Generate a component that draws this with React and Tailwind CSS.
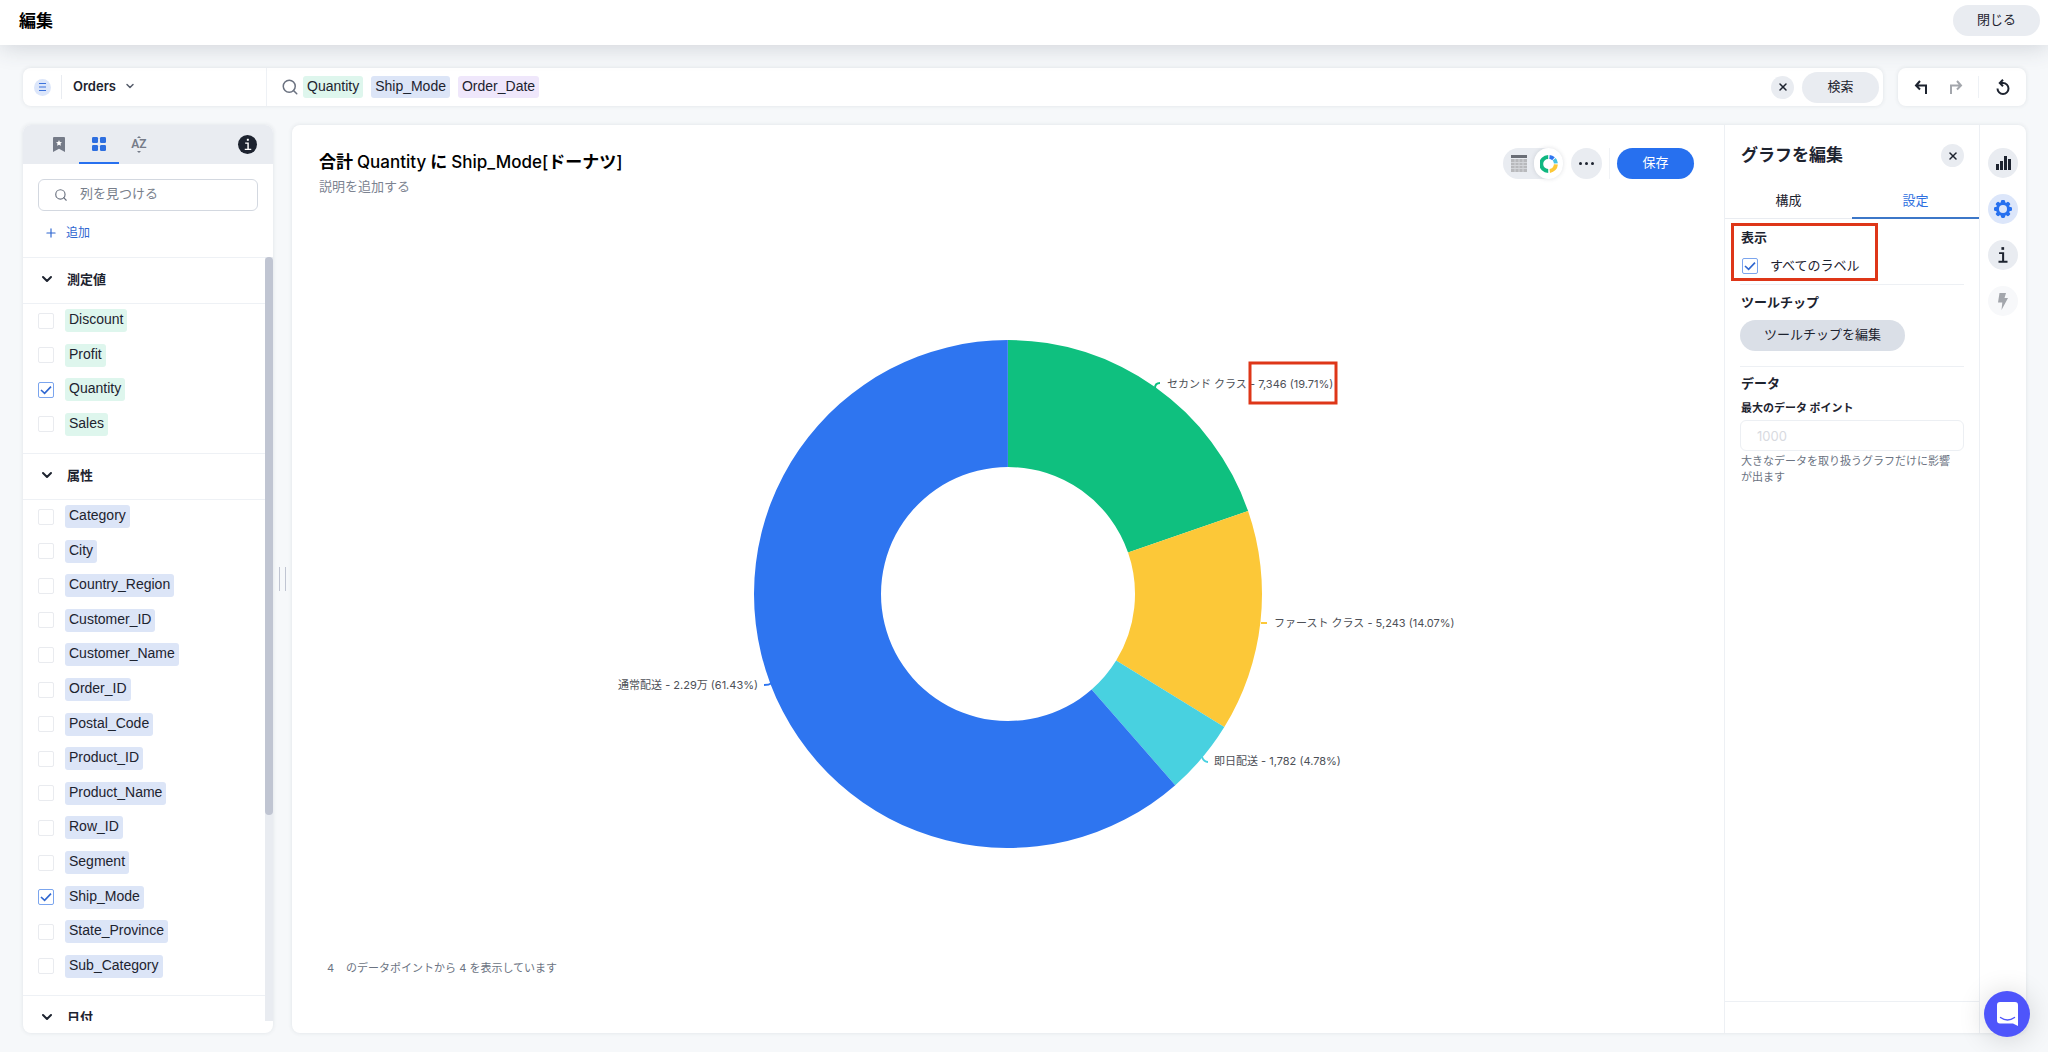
import { useState } from "react";
import { ChevronDown, Plus, Search, X } from "lucide-react";
import clsx from "clsx";

const MEASURES = ["Discount", "Profit", "Quantity", "Sales"];

const ATTRIBUTES = [
  "Category",
  "City",
  "Country_Region",
  "Customer_ID",
  "Customer_Name",
  "Order_ID",
  "Postal_Code",
  "Product_ID",
  "Product_Name",
  "Row_ID",
  "Segment",
  "Ship_Mode",
  "State_Province",
  "Sub_Category",
];

const SLICES = [
  { share: 19.71, color: "#0fc07f", name: "セカンド クラス", value: "7,346 (19.71%)", x: 619, y: 54, line: "M607 54q0 -5 5 -5" },
  { share: 14.07, color: "#fcc838", name: "ファースト クラス", value: "5,243 (14.07%)", x: 726, y: 293, line: "M713 289h6" },
  { share: 4.78, color: "#48d1e0", name: "即日配送", value: "1,782 (4.78%)", x: 666, y: 431, line: "M654 423q2 5 6 5" },
  { share: 61.43, color: "#2e75f0", name: "通常配送", value: "2.29万 (61.43%)", x: 210, y: 355, end: true, line: "M224 349q-3 2 -8 2" },
];

const CX = 460;
const CY = 260;
const OUTER = 254;
const INNER = 127;

const point = (share, r) => {
  const a = (share / 100) * Math.PI * 2 - Math.PI / 2;
  return `${CX + r * Math.cos(a)} ${CY + r * Math.sin(a)}`;
};

const ring = (from, to) => {
  const large = to - from > 50 ? 1 : 0;
  return `M${point(from, OUTER)} A${OUTER} ${OUTER} 0 ${large} 1 ${point(to, OUTER)} L${point(to, INNER)} A${INNER} ${INNER} 0 ${large} 0 ${point(from, INNER)} Z`;
};

const InfoGlyph = ({ className }) => (
  <svg viewBox="0 0 12 16" className={className} fill="currentColor">
    <rect x="4.6" y="1" width="2.4" height="2.4" />
    <path d="M2.500 5.600h4.500v7.600h3v1.600H2v-1.600h3.200V7.200H2.500z" />
  </svg>
);

const ArrowGlyph = ({ className }) => (
  <svg viewBox="0 0 16 16" className={className} fill="none" stroke="currentColor" strokeWidth="2">
    <path d="M7 2L3 6.500l4 4M3.500 6.500H13V15" />
  </svg>
);

const DonutGlyph = () => (
  <svg viewBox="0 0 18 18" className="h-[18px] w-[18px]" fill="none" strokeWidth="4">
    <path d="M8.200 16A7 7 0 0 1 8.200 2" stroke="#0fb780" />
    <path d="M9.500 2A7 7 0 0 1 13.500 3.700" stroke="#2e75f0" />
    <path d="M14.200 4.300A7 7 0 0 1 15.900 8.300" stroke="#48c1e0" />
    <path d="M15.900 9.400A7 7 0 0 1 9.800 15.900" stroke="#fcc838" />
  </svg>
);

const TableGlyph = () => (
  <svg viewBox="0 0 16 17" className="h-[17px] w-4">
    <rect width="16" height="3" fill="#6a6e76" />
    <rect y="4" width="16" height="13" fill="#b8b9bc" />
    <path d="M4 4v13M8 4v13M12 4v13M0 7.500h16M0 10.500h16M0 13.500h16" stroke="#d3d5d9" strokeWidth="1" />
  </svg>
);

const GearGlyph = () => (
  <svg viewBox="0 0 20 20" className="h-5 w-5">
    <g fill="#2770ef">
      {[0, 45, 90, 135].map((a) => (
        <rect key={a} x="7.9" y="1" width="4.2" height="18" rx="1.4" transform={`rotate(${a} 10 10)`} />
      ))}
      <circle cx="10" cy="10" r="7" />
    </g>
    <circle cx="10" cy="10" r="4" fill="#dce6fa" />
  </svg>
);

const CheckBox = ({ id, defaultChecked }) => (
  <span className="relative flex h-4 w-4 shrink-0">
    <input
      id={id}
      type="checkbox"
      defaultChecked={defaultChecked}
      className="peer h-4 w-4 appearance-none rounded-[2px] border border-[#e9ebef] bg-white checked:border-[#7ba5ee]"
    />
    <svg
      viewBox="0 0 16 16"
      className="pointer-events-none absolute inset-0 hidden h-4 w-4 peer-checked:block"
      fill="none"
      stroke="#2e66d0"
      strokeWidth="1.6"
    >
      <path d="M3 8l3.600 3.400L13 4.600" />
    </svg>
  </span>
);

const ColumnSection = ({ title, items = [], selected, chipClass, listClass }) => (
  <section>
    <h3 className="border-y border-[#eef1f5]">
      <button className="flex h-[45px] w-full items-center gap-3 pb-1 pl-4 text-[13px] leading-4 font-bold">
        <ChevronDown className="h-4 w-4" strokeWidth={3} />
        {title}
      </button>
    </h3>
    {items.length > 0 && (
      <ul className={clsx("flex flex-col justify-between pt-[5px] pb-[17px] pl-[15px]", listClass)}>
        {items.map((item) => (
          <li key={item} className="flex items-center gap-[11px]">
            <CheckBox id={item} defaultChecked={item === selected} />
            <label
              htmlFor={item}
              className={clsx("rounded-[3px] px-1 pb-0.5 font-['Liberation_Sans'] text-sm leading-[21px]", chipClass)}
            >
              {item}
            </label>
          </li>
        ))}
      </ul>
    )}
  </section>
);

const Sidebar = () => (
  <aside className="flex w-[250px] shrink-0 flex-col overflow-hidden rounded-lg bg-white pb-3 shadow-[0_0_4px_rgba(60,70,90,0.12)]">
    <div className="flex h-[39px] shrink-0 items-center bg-[#e9ecf1] pr-4 pl-4">
      <button className="flex h-[39px] w-10 items-center justify-center text-[#757b88]" aria-label="ブックマーク">
        <svg viewBox="0 0 12 15" className="h-[15px] w-3" fill="currentColor">
          <path d="M0 1q0-1 1-1h10q1 0 1 1v14l-6-3.2L0 15z" />
          <path d="M6 3l.9 1.9 2.1.3-1.5 1.4.4 2.1L6 7.7l-1.900 1 .4-2.100L3 5.200l2.100-.3z" fill="#fff" />
        </svg>
      </button>
      <button
        className="flex h-[39px] w-10 items-center justify-center border-b-2 border-[#2770ef] text-[#2e6fe0]"
        aria-label="列"
      >
        <svg viewBox="0 0 14 14" className="h-3.5 w-3.5" fill="currentColor">
          <rect width="6" height="6" rx="1.200" />
          <rect x="8" width="6" height="6" rx="1.200" />
          <rect y="8" width="6" height="6" rx="1.200" />
          <rect x="8" y="8" width="6" height="6" rx="1.200" />
        </svg>
      </button>
      <button className="flex h-[39px] w-10 flex-col items-center justify-center text-[#757b88]">
        <svg viewBox="0 0 6 3" className="h-0.5 w-1" fill="currentColor">
          <path d="M0 3l3-3 3 3z" />
        </svg>
        <span className="font-['Roboto'] text-[12px] leading-[13px] font-semibold">AZ</span>
        <svg viewBox="0 0 6 3" className="h-0.5 w-1" fill="currentColor">
          <path d="M0 0l3 3 3-3z" />
        </svg>
      </button>
      <button
        className="ml-auto flex h-[19px] w-[19px] items-center justify-center rounded-full bg-[#1d232f] text-white"
        aria-label="情報"
      >
        <InfoGlyph className="h-[13px] w-2.5" />
      </button>
    </div>

    <div className="px-[15px] pt-[15px]">
      <div className="flex h-8 items-center gap-3 rounded-md border border-[#d3d8e0] pl-[15px]">
        <Search className="h-4 w-4 text-[#6b7280]" />
        <input
          type="text"
          aria-label="列を見つける"
          placeholder="列を見つける"
          className="w-full min-w-0 pb-0.5 text-[13px] outline-none placeholder:text-[#777e8b]"
        />
      </div>
      <button className="mt-[13px] mb-[15px] flex h-[18px] items-center gap-2 pl-1.5 text-[12px] leading-4 text-[#2e66d0]">
        <Plus className="h-3.5 w-3.5" />
        追加
      </button>
    </div>

    <div className="flex min-h-0 flex-1">
      <div className="min-w-0 flex-1 overflow-hidden">
        <ColumnSection title="測定値" items={MEASURES} selected="Quantity" chipClass="bg-[#def6ed]" listClass="h-[149px]" />
        <ColumnSection title="属性" items={ATTRIBUTES} selected="Ship_Mode" chipClass="bg-[#dce5f7]" listClass="h-[495px]" />
        <ColumnSection title="日付" />
      </div>
      <div className="w-2 bg-[#e9ecf1]">
        <div className="h-[73%] rounded-full bg-[#c0c5d2]"></div>
      </div>
    </div>
  </aside>
);

const Donut = () => {
  let start = 0;
  return (
    <svg viewBox="0 0 920 520" className="h-[520px] w-[920px] max-w-full">
      {SLICES.map((s) => {
        const from = start;
        start += s.share;
        return (
          <g key={s.name}>
            <path d={ring(from, start)} fill={s.color} />
            <path d={s.line} fill="none" stroke={s.color} strokeWidth="2" />
            <text x={s.x} y={s.y} textAnchor={s.end ? "end" : "start"} fontSize="11" fill="#4d5057">
              {s.name} - {s.value}
            </text>
          </g>
        );
      })}
      <rect x="702" y="29" width="86" height="40" fill="none" stroke="#de3618" strokeWidth="3" />
    </svg>
  );
};

const ChartPanel = () => (
  <section className="flex min-w-0 flex-1 flex-col px-[27px]">
    <div className="flex items-start justify-between pt-[23px]">
      <div>
        <h2 className="text-[17px] leading-[29px] font-bold text-black">
          合計 <span className="font-medium">Quantity</span> に <span className="font-medium">Ship_Mode[</span>ドーナツ
          <span className="font-medium">]</span>
        </h2>
        <p className="text-[13px] leading-[18px] text-[#7c8391]">説明を追加する</p>
      </div>
      <div className="flex items-center pr-[3px]">
        <div className="flex h-[31px] items-center rounded-full bg-[#e9ecf1]">
          <button className="flex h-[31px] w-[31px] items-center justify-center" aria-label="表">
            <TableGlyph />
          </button>
          <button
            className="flex h-[31px] w-[29px] items-center justify-center rounded-full bg-white shadow-[0_0_4px_rgba(60,70,90,0.16)]"
            aria-label="グラフ"
          >
            <DonutGlyph />
          </button>
        </div>
        <button
          className="ml-2 flex h-[31px] w-[31px] items-center justify-center gap-[3px] rounded-full bg-[#e9ecf1]"
          aria-label="その他"
        >
          <span className="h-[3px] w-[3px] rounded-full bg-[#1d232f]"></span>
          <span className="h-[3px] w-[3px] rounded-full bg-[#1d232f]"></span>
          <span className="h-[3px] w-[3px] rounded-full bg-[#1d232f]"></span>
        </button>
        <div className="mx-[7px] h-[31px] w-px bg-[#f1f3f6]"></div>
        <button className="h-[31px] w-[77px] rounded-full bg-[#2770ef] pb-[3px] text-[13px] leading-4 text-white">保存</button>
      </div>
    </div>

    <div className="flex min-h-0 flex-1 items-center justify-center pt-8">
      <Donut />
    </div>

    <p className="mb-[57px] flex gap-3 pl-2 text-[11px] leading-4 text-[#6b7382]">
      <span>4</span>
      <span>のデータポイントから 4 を表示しています</span>
    </p>
  </section>
);

const EditPanel = () => {
  const [tab, setTab] = useState("設定");

  return (
    <section className="flex w-[255px] shrink-0 flex-col border-l border-[#edf0f4]">
      <div className="flex h-[61px] items-center justify-between pr-[15px] pl-4">
        <h2 className="pb-0.5 text-[17px] leading-6 font-bold">グラフを編集</h2>
        <button className="flex h-[23px] w-[23px] items-center justify-center rounded-full bg-[#e9ecf1]" aria-label="閉じる">
          <X className="h-3 w-3" strokeWidth={3} />
        </button>
      </div>
      <div className="grid h-[33px] grid-cols-2 border-b border-[#e9ecf1]">
        {["構成", "設定"].map((name) => (
          <button
            key={name}
            onClick={() => setTab(name)}
            className={clsx(
              "h-[33px] border-b-2 pb-[3px] text-[13px] leading-4",
              tab === name ? "border-[#3c77c8] text-[#2e6fe0]" : "border-transparent"
            )}
          >
            {name}
          </button>
        ))}
      </div>

      <div className="relative mr-[15px] ml-[15px] border-b border-[#edf0f4] pt-2.5 pb-[9px] text-[13px] leading-4">
        <div className="absolute top-1 -left-[9px] h-[58px] w-[147px] border-[3px] border-[#de3618]"></div>
        <h3 className="pl-px font-bold">表示</h3>
        <div className="mt-3 flex items-center gap-3 pl-0.5">
          <CheckBox id="all-labels" defaultChecked />
          <label htmlFor="all-labels" className="pb-0.5">すべてのラベル</label>
        </div>
      </div>

      <div className="mr-[15px] ml-[15px] border-b border-[#edf0f4] pt-[9px] pb-[15px] text-[13px] leading-4">
        <h3 className="pl-px font-bold">ツールチップ</h3>
        <button className="mt-2.5 h-[31px] rounded-full bg-[#dadfe7] px-6 pb-[3px]">ツールチップを編集</button>
      </div>

      <div className="mr-[15px] ml-[15px] pt-2 text-[13px] leading-4">
        <h3 className="pl-px font-bold">データ</h3>
        <label htmlFor="max-points" className="mt-[9px] block pl-px text-[11px] leading-4 font-bold">
          最大のデータ ポイント
        </label>
        <input
          id="max-points"
          type="text"
          placeholder="1000"
          className="mt-1 h-[31px] w-full rounded-md border border-[#eceff3] px-4 text-[13px] outline-none placeholder:text-[#d8dadf]"
        />
        <p className="mt-0.5 pr-2 pl-px text-[11px] leading-4 text-[#6b7382]">
          大きなデータを取り扱うグラフだけに影響が出ます
        </p>
      </div>

      <div className="mt-auto h-8 border-t border-[#edf0f4]"></div>
    </section>
  );
};

const Rail = () => (
  <nav className="flex w-[47px] shrink-0 flex-col items-center gap-4 border-l border-[#edf0f4] pt-[23px]">
    <button className="flex h-[30px] w-[30px] items-center justify-center rounded-full bg-[#e9ecf1]" aria-label="グラフ">
      <svg viewBox="0 0 15 14" className="h-3.5 w-[15px]" fill="#1d232f">
        <rect y="8" width="3" height="6" />
        <rect x="4" y="5" width="3" height="9" />
        <rect x="8" width="3" height="14" />
        <rect x="12" y="3" width="3" height="11" />
      </svg>
    </button>
    <button className="flex h-[30px] w-[30px] items-center justify-center rounded-full bg-[#dce6fa]" aria-label="設定">
      <GearGlyph />
    </button>
    <button className="flex h-[30px] w-[30px] items-center justify-center rounded-full bg-[#e9ecf1]" aria-label="情報">
      <InfoGlyph className="h-[18px] w-3.5" />
    </button>
    <button className="flex h-[30px] w-[30px] items-center justify-center rounded-full bg-[#f7f8fa]" aria-label="アクション">
      <svg viewBox="0 0 10 17" className="h-[17px] w-2.5" fill="#a3a6ac">
        <path d="M1.500 0h6.500L6.500 5H10L3.500 17l.8-7.500H0z" />
      </svg>
    </button>
  </nav>
);

export default function App() {
  return (
    <div className="flex h-screen flex-col overflow-hidden bg-[#f6f8fa] font-['Inter','Noto_Sans_CJK_JP',sans-serif] text-[#1d232f]">
      <header className="relative z-10 flex h-[45px] shrink-0 items-center justify-between bg-white pr-2 pb-1 pl-[19px] shadow-[0_2px_24px_rgba(50,60,80,0.2)]">
        <h1 className="text-[17px] leading-6 font-bold text-black">編集</h1>
        <button className="h-[31px] w-[87px] rounded-full bg-[#e9ecf1] pb-[3px] text-[13px] leading-4">閉じる</button>
      </header>

      <div className="flex shrink-0 gap-[15px] px-[22px] pt-[23px] pl-[23px]">
        <div className="flex h-[38px] min-w-0 flex-1 items-center rounded-lg bg-white pr-1 shadow-[0_0_4px_rgba(60,70,90,0.12)]">
          <div className="flex h-[38px] w-[244px] shrink-0 items-center border-r border-[#eef1f5] pl-[11px]">
            <span className="flex h-[17px] w-[17px] items-center justify-center rounded-full bg-[#dce6fa]">
              <svg viewBox="0 0 7 8" className="h-2 w-[7px]" stroke="#3c72dc" strokeWidth="1">
                <path d="M0 .5h7M0 4h7M0 7.500h7" />
              </svg>
            </span>
            <div className="mr-[11px] ml-2.5 h-6 w-px bg-[#e9ecf1]"></div>
            <button className="flex items-center gap-2 pb-0.5 text-[13px] leading-4 font-semibold">
              Orders
              <ChevronDown className="h-3 w-3 text-[#565d6b]" strokeWidth={3} />
            </button>
          </div>
          <div className="flex min-w-0 flex-1 items-center gap-2 pl-3.5 font-['Liberation_Sans'] text-sm leading-5">
            <Search className="-mr-1 h-[18px] w-[18px] shrink-0 text-[#6b7280]" />
            <span className="rounded-[3px] bg-[#def6ed] px-1 pb-0.5">Quantity</span>
            <span className="rounded-[3px] bg-[#dce5f7] px-1 pb-0.5">Ship_Mode</span>
            <span className="rounded-[3px] bg-[#efe7fb] px-1 pb-0.5">Order_Date</span>
            <input type="text" aria-label="検索" className="h-[22px] min-w-0 flex-1 outline-none" />
          </div>
          <button className="flex h-[23px] w-[23px] items-center justify-center rounded-full bg-[#e9ecf1]" aria-label="クリア">
            <X className="h-3 w-3" strokeWidth={3} />
          </button>
          <button className="ml-2 h-[31px] w-[77px] rounded-full bg-[#e9ecf1] pb-[3px] text-[13px] leading-4">検索</button>
        </div>

        <div className="flex h-[38px] w-32 shrink-0 items-center rounded-lg bg-white px-[15px] shadow-[0_0_4px_rgba(60,70,90,0.12)]">
          <button aria-label="元に戻す">
            <ArrowGlyph className="h-4 w-4" />
          </button>
          <button className="ml-[19px] text-[#a3a6ac]" aria-label="やり直す">
            <ArrowGlyph className="h-4 w-4 -scale-x-100" />
          </button>
          <div className="mr-4 ml-auto h-[22px] w-px bg-[#eef1f5]"></div>
          <button aria-label="リセット">
            <svg viewBox="0 0 16 16" className="h-4 w-4" fill="none" stroke="currentColor" strokeWidth="2">
              <path d="M2.500 9.500A5.500 5.500 0 1 0 8 4H5" />
              <path d="M8 .8L4.800 4 8 7.200" />
            </svg>
          </button>
        </div>
      </div>

      <main className="flex min-h-0 flex-1 pt-[19px] pr-[22px] pb-[19px] pl-[23px]">
        <Sidebar />
        <div className="flex w-[19px] shrink-0 items-center justify-center gap-[5px]">
          <span className="h-6 w-px bg-[#c0c5d2]"></span>
          <span className="h-6 w-px bg-[#c0c5d2]"></span>
        </div>
        <div className="flex min-w-0 flex-1 rounded-lg bg-white shadow-[0_0_4px_rgba(60,70,90,0.12)]">
          <ChartPanel />
          <EditPanel />
          <Rail />
        </div>
      </main>

      <button
        className="fixed right-[18px] bottom-[15px] flex h-[46px] w-[46px] items-center justify-center rounded-full bg-[#4e55fb] shadow-[0_2px_28px_rgba(0,0,0,0.16)]"
        aria-label="チャット"
      >
        <svg viewBox="0 0 21 24" className="h-6 w-[21px]">
          <path d="M3 0h15q3 0 3 3v21l-5-2.500H3q-3 0-3-3V3q0-3 3-3z" fill="#fff" />
          <path d="M3.500 15.500q7 5 14 0" fill="none" stroke="#4e55fb" strokeWidth="1.400" strokeLinecap="round" />
        </svg>
      </button>
    </div>
  );
}
